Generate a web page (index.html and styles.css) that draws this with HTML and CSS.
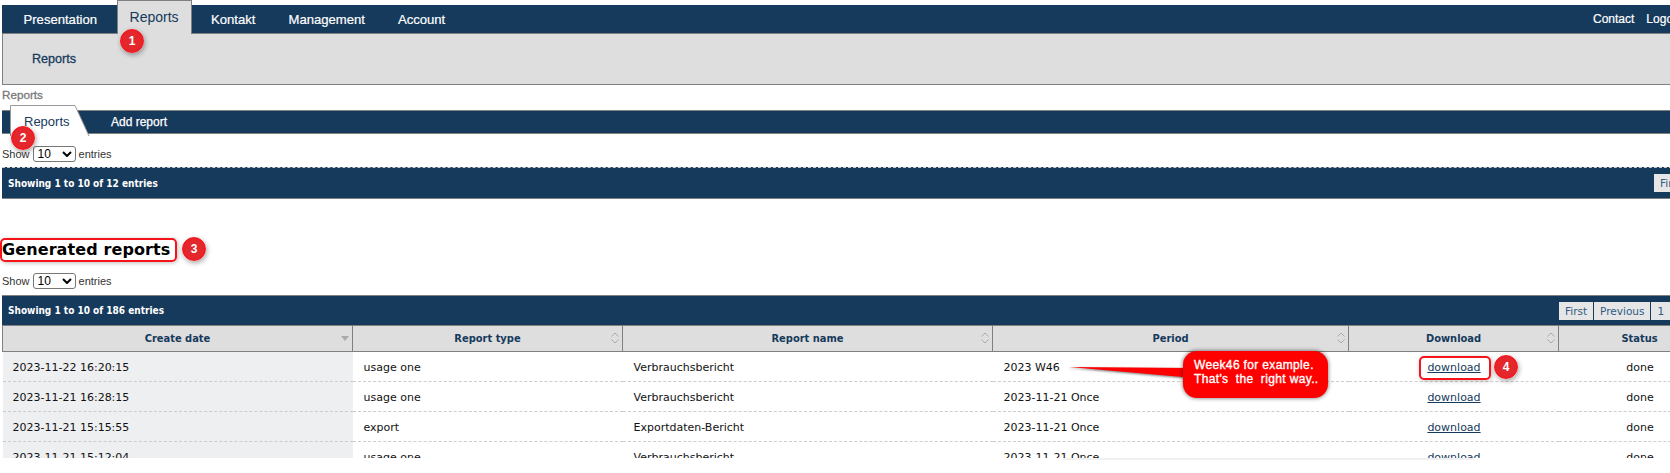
FILE: index.html
```html
<!DOCTYPE html>
<html lang="en">
<head>
  <meta charset="UTF-8">
  <meta name="viewport" content="width=device-width, initial-scale=1.0">
  <title>Reports</title>
  <link rel="stylesheet" href="styles.css">
</head>
<body>
  <div id="page">
    <div class="content">
      <div class="main-nav">
        <a class="nav-item">Presentation</a>
        <a class="nav-item active">Reports</a>
        <a class="nav-item">Kontakt</a>
        <a class="nav-item">Management</a>
        <a class="nav-item">Account</a>
        <div class="nav-right">
          <a>Contact</a>
          <a>Logout</a>
        </div>
      </div>
      <div class="sub-nav"><a>Reports</a></div>
      <div class="breadcrumb">Reports</div>

      <div class="tab-bar">
        <a class="tab active">
          <svg class="tab-shape" width="80" height="31" viewBox="0 0 80 31"><path d="M.5 31V.5H65L79 31" fill="#fff" stroke="#999"/></svg>
          <span>Reports</span>
        </a>
        <a class="tab">Add report</a>
      </div>

      <div class="length-row">
        Show
        <span class="fake-select">10 <svg width="10" height="6" viewBox="0 0 10 6"><path d="M1 1l4 4 4-4" fill="none" stroke="#000" stroke-width="2"/></svg></span>
        entries
      </div>
      <div class="table-bar first-bar">
        <span>Showing 1 to 10 of 12 entries</span>
        <div class="pager"><a>First</a><a>Previous</a></div>
      </div>

      <h2 class="section-title">Generated reports</h2>

      <div class="length-row second">
        Show
        <span class="fake-select">10 <svg width="10" height="6" viewBox="0 0 10 6"><path d="M1 1l4 4 4-4" fill="none" stroke="#000" stroke-width="2"/></svg></span>
        entries
      </div>
      <div class="table-bar">
        <span>Showing 1 to 10 of 186 entries</span>
        <div class="pager"><a>First</a><a>Previous</a><a>1</a><a>2</a></div>
      </div>

      <table class="reports">
        <colgroup>
          <col class="col-date"><col class="col-type"><col class="col-name"><col class="col-period"><col class="col-download"><col class="col-status">
        </colgroup>
        <thead>
          <tr>
            <th>Create date<svg class="sort" width="10" height="14" viewBox="0 0 10 14"><path d="M1 5h8L5 10z" fill="#aaa"/></svg></th>
            <th>Report type<svg class="sort" width="10" height="14" viewBox="0 0 10 14"><path d="M1.500 5.500L5 2l3.500 3.500M1.500 8.500L5 12l3.500-3.500" fill="none" stroke="#aaa"/></svg></th>
            <th>Report name<svg class="sort" width="10" height="14" viewBox="0 0 10 14"><path d="M1.500 5.500L5 2l3.500 3.500M1.500 8.500L5 12l3.500-3.500" fill="none" stroke="#aaa"/></svg></th>
            <th>Period<svg class="sort" width="10" height="14" viewBox="0 0 10 14"><path d="M1.500 5.500L5 2l3.500 3.500M1.500 8.500L5 12l3.500-3.500" fill="none" stroke="#aaa"/></svg></th>
            <th>Download<svg class="sort" width="10" height="14" viewBox="0 0 10 14"><path d="M1.500 5.500L5 2l3.500 3.500M1.500 8.500L5 12l3.500-3.500" fill="none" stroke="#aaa"/></svg></th>
            <th>Status</th>
          </tr>
        </thead>
        <tbody>
          <tr><td>2023-11-22 16:20:15</td><td>usage one</td><td>Verbrauchsbericht</td><td>2023 W46</td><td class="center"><a>download</a></td><td class="center">done</td></tr>
          <tr><td>2023-11-21 16:28:15</td><td>usage one</td><td>Verbrauchsbericht</td><td>2023-11-21 Once</td><td class="center"><a>download</a></td><td class="center">done</td></tr>
          <tr><td>2023-11-21 15:15:55</td><td>export</td><td>Exportdaten-Bericht</td><td>2023-11-21 Once</td><td class="center"><a>download</a></td><td class="center">done</td></tr>
          <tr><td>2023-11-21 15:12:04</td><td>usage one</td><td>Verbrauchsbericht</td><td>2023-11-21 Once</td><td class="center"><a>download</a></td><td class="center">done</td></tr>
        </tbody>
      </table>
    </div>

    <!-- screenshot annotations -->
    <span class="badge b1">1</span>
    <span class="badge b2">2</span>
    <span class="mark mark-title"></span>
    <span class="badge b3">3</span>
    <span class="mark mark-download"></span>
    <span class="badge b4">4</span>
    <svg class="callout-tail" width="125" height="22" viewBox="0 0 125 22"><path d="M0 5L125 6V16z" fill="#f00"/></svg>
    <div class="callout">Week46 for example.<br>That's&nbsp; the&nbsp; right way..</div>
    <span class="crop-edge"></span>
  </div>
</body>
</html>
```

FILE: styles.css
```css
* {
  margin: 0;
  padding: 0;
  box-sizing: border-box;
}

:root {
  --navy: #163a5c;
  --line: #808080;
  --panel: #dedede;
}

body {
  background-color: #fff;
  color: #000;
  font-family: "Liberation Sans", Arial, sans-serif;
  font-size: 11px;
  overflow: hidden;
}

#page {
  position: relative;
  width: 1670px;
  height: 473px;
  overflow: hidden;
}

.content {
  width: 1720px;
  height: 458px;
  margin-left: 2px;
  padding-top: 5px;
  overflow: hidden;
}

.main-nav {
  position: relative;
  display: flex;
  height: 29px;
  padding-left: 5px;
  background-color: var(--navy);
  border-bottom: 1px solid var(--line);
  color: #fff;
  font-size: 13.1px;
  line-height: 29px;
}

.nav-item {
  padding: 0 16.5px;
  -webkit-text-stroke: 0.2px #fff;
}

.nav-item.active {
  height: 34px;
  margin: -5px 3px 0 3px;
  padding: 0 12px;
  background-color: var(--panel);
  border: 1px solid var(--line);
  border-bottom: none;
  color: var(--navy);
  font-size: 14px;
  line-height: 32px;
  -webkit-text-stroke: 0;
}

.nav-right {
  position: absolute;
  left: 1591px;
  top: 0;
  display: flex;
  gap: 12px;
  font-size: 12px;
  line-height: 28px;
  -webkit-text-stroke: 0.2px #fff;
}

.sub-nav {
  height: 51px;
  padding: 18px 0 0 29px;
  background-color: var(--panel);
  border: 1px solid var(--line);
  border-top: none;
  color: var(--navy);
  font-size: 12.6px;
  -webkit-text-stroke: 0.3px var(--navy);
}

.breadcrumb {
  height: 25px;
  padding-top: 3px;
  color: #777;
  font-size: 11.7px;
  -webkit-text-stroke: 0.3px #777;
}

.tab-bar {
  display: flex;
  height: 24px;
  padding-left: 8px;
  background-color: var(--navy);
  border-top: 1px solid var(--line);
  border-bottom: 1px solid var(--line);
  color: #fff;
  font-size: 12px;
  line-height: 22px;
  -webkit-text-stroke: 0.25px #fff;
}

.tab {
  position: relative;
}

.tab.active {
  width: 79px;
  padding-left: 14px;
  color: var(--navy);
  font-size: 13px;
  -webkit-text-stroke: 0;
}

.tab.active span {
  position: relative;
}

.tab-shape {
  position: absolute;
  left: 0;
  top: -6px;
}

.tab + .tab {
  padding-left: 22px;
}

.length-row {
  display: flex;
  align-items: center;
  gap: 3px;
  height: 33px;
  padding-top: 7px;
  color: #333;
}

.length-row.second {
  height: 29px;
  padding-top: 0;
}

.fake-select {
  display: flex;
  align-items: center;
  justify-content: space-between;
  width: 43px;
  height: 16px;
  padding: 0 3px 0 4px;
  border: 1px solid #767676;
  border-radius: 3px;
  color: #000;
  font-size: 12px;
}

.table-bar {
  display: flex;
  align-items: center;
  height: 31px;
  padding-left: 6px;
  background-color: var(--navy);
  border-top: 1px solid var(--line);
  border-bottom: 1px solid var(--line);
  color: #fff;
  font-family: "DejaVu Sans", Verdana, sans-serif;
  font-size: 10px;
  font-stretch: condensed;
  font-weight: bold;
}

.first-bar {
  height: 32px;
  border-top: 1px dashed #ccc;
}

.pager {
  display: flex;
  gap: 1px;
  width: 163px;
  margin-left: auto;
  overflow: hidden;
  font-stretch: normal;
  font-weight: normal;
}

.first-bar .pager {
  width: 68px;
}

.pager a {
  flex-shrink: 0;
  height: 18px;
  padding: 0 6px;
  background-color: #e6e6e6;
  color: #2e5c85;
  font-size: 10.5px;
  line-height: 18px;
}

.section-title {
  height: 67px;
  padding-top: 41px;
  font-family: "DejaVu Sans", Verdana, sans-serif;
  font-size: 16px;
  letter-spacing: 0.1px;
  line-height: 20px;
}

.reports {
  width: 1718px;
  table-layout: fixed;
  border-collapse: collapse;
  font-family: "DejaVu Sans", Verdana, sans-serif;
  font-size: 11px;
}

.col-date { width: 350px; }
.col-type { width: 270px; }
.col-name { width: 370px; }
.col-period { width: 356px; }
.col-download { width: 210px; }
.col-status { width: 162px; }

.reports th {
  position: relative;
  height: 25px;
  background-color: var(--panel);
  border-right: 1px solid var(--line);
  border-bottom: 1px solid var(--line);
  color: var(--navy);
  font-stretch: condensed;
  font-weight: bold;
  text-align: center;
}

.reports th:first-child {
  border-left: 1px solid var(--line);
}

.sort {
  position: absolute;
  right: 2px;
  top: 5px;
}

.reports td {
  height: 30px;
  padding: 2px 10px 0 11px;
  border-bottom: 1px dashed #ccc;
  color: #111;
}

.reports td:first-child {
  padding-left: 10px;
  background-color: #eeeff1;
}

.reports td.center {
  text-align: center;
}

.reports td a {
  color: var(--navy);
  text-decoration: underline;
}

.badge {
  position: absolute;
  display: flex;
  align-items: center;
  justify-content: center;
  width: 24px;
  height: 24px;
  border: 1px solid #f5141a;
  border-radius: 50%;
  background: radial-gradient(circle, #e3282d 50%, #f0161c 100%);
  box-shadow: 1px 2px 5px rgba(0, 0, 0, 0.35);
  color: #fff;
  font-size: 12px;
  font-weight: bold;
}

.b1 { left: 120px; top: 29px; }
.b2 { left: 11px; top: 126px; }
.b3 { left: 182px; top: 237px; }
.b4 { left: 1494px; top: 355px; }

.mark {
  position: absolute;
  border: 2px solid #f5141a;
  border-radius: 5px;
  box-shadow: 1px 1px 4px rgba(0, 0, 0, 0.25);
}

.mark-title {
  left: 0;
  top: 238px;
  width: 177px;
  height: 24px;
}

.mark-download {
  left: 1419px;
  top: 356px;
  width: 72px;
  height: 24px;
}

.callout-tail {
  position: absolute;
  left: 1069px;
  top: 362px;
  filter: drop-shadow(-1px 1px 1px rgba(0, 0, 0, 0.5));
}

.callout {
  position: absolute;
  left: 1183px;
  top: 351px;
  width: 145px;
  height: 47px;
  padding: 7px 0 0 11px;
  border-radius: 14px;
  background-color: #f00;
  box-shadow: 0 0 4px rgba(0, 0, 0, 0.6);
  color: #fff;
  font-size: 12px;
  letter-spacing: 0.35px;
  line-height: 14px;
  -webkit-text-stroke: 0.35px #fff;
}

.crop-edge {
  position: absolute;
  left: 1063px;
  top: 458px;
  width: 411px;
  height: 2px;
  background-color: #f0f0f0;
}
```
